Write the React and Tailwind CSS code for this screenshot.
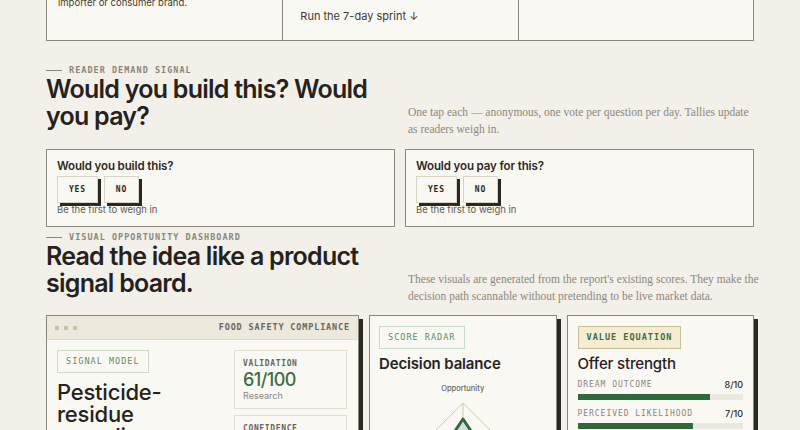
import React from "react";

const sans = "font-['Inter','Liberation_Sans',sans-serif]";
const mono = "font-['DejaVu_Sans_Mono','Liberation_Mono',monospace]";
const serif = "font-['Liberation_Serif','DejaVu_Serif',serif]";

const SectionLabel = ({ children }) => (
  <div className="flex items-center gap-[7px] h-[12px]">
    <span className="block w-[16px] h-px bg-[#8b867b]" />
    <span className={`${mono} text-[8.5px] font-bold tracking-[0.12em] text-[#8b867b] leading-[12px]`}>
      {children}
    </span>
  </div>
);

const SectionHead = ({ label, title, note }) => (
  <div className="grid grid-cols-2 gap-[16px] items-end">
    <div className="pb-[7px]">
      <SectionLabel>{label}</SectionLabel>
      <h2 className={`${sans} text-[25px] font-semibold leading-[27px] tracking-[-0.03em] text-[#25221d]`}>
        {title}
      </h2>
    </div>
    <p className={`${serif} -mr-[10px] text-[11.5px] leading-[16.5px] text-[#8d877c]`}>{note}</p>
  </div>
);

const VoteButton = ({ children }) => (
  <button className={`${mono} h-[27px] px-[11px] border border-[#d9d3c6] bg-[#faf8f3] text-[8px] font-bold tracking-[0.1em] text-[#2b2822] shadow-[3px_3px_0_#2b2822]`}>
    {children}
  </button>
);

const VoteCard = ({ question }) => (
  <div className="border border-[#8b877d] bg-[#faf8f3] px-[10px] pt-[8px] pb-[10px]">
    <div className={`${sans} text-[11.5px] font-semibold leading-[16px] tracking-[-0.01em] text-[#2b2822]`}>{question}</div>
    <div className="flex gap-[6px] mt-[2px]">
      <VoteButton>YES</VoteButton>
      <VoteButton>NO</VoteButton>
    </div>
    <div className={`${sans} text-[9.5px] leading-[12px] mt-[1px] text-[#5f5a51]`}>Be the first to weigh in</div>
  </div>
);

const Badge = ({ children, tone = "green" }) => (
  <div
    className={
      tone === "gold"
        ? `${mono} flex w-fit items-center h-[23px] px-[8px] border border-[#c7c096] bg-[#f6ecd3] text-[8.5px] font-bold tracking-[0.12em] text-[#3b6e45]`
        : `${mono} flex w-fit items-center h-[23px] px-[8px] border border-[#cadcc9] text-[8.5px] tracking-[0.12em] text-[#5a8f64]`
    }
  >
    {children}
  </div>
);

const Metric = ({ label, value, sub }) => (
  <div className="border border-[#e4ded0] px-[8px] pt-[7px] pb-[6px]">
    <div className={`${mono} text-[8px] font-bold tracking-[0.08em] text-[#6b665b] leading-[12px]`}>{label}</div>
    <div className={`${sans} text-[18px] font-medium leading-[20px] tracking-[-0.03em] text-[#3a6f43]`}>{value}</div>
    <div className={`${sans} text-[9px] leading-[12px] text-[#8b867b]`}>{sub}</div>
  </div>
);

const Bar = ({ label, score }) => (
  <div>
    <div className="flex justify-between items-center h-[12px]">
      <span className={`${mono} text-[8px] tracking-[0.12em] text-[#8b867b]`}>{label}</span>
      <span className={`${sans} text-[9px] font-medium text-[#2b2822]`}>{score}/10</span>
    </div>
    <div className="h-[6px] mt-[3px] bg-[#ebe8df]">
      <div className="h-full bg-[#2e6a3c]" style={{ width: `${score * 10}%` }} />
    </div>
  </div>
);

const Radar = () => (
  <svg width="160" height="120" viewBox="0 0 160 120" className="mx-auto">
    <polygon points="80,2 138,60 80,118 22,60" fill="none" stroke="#d8c9aa" strokeWidth="1" />
    <polygon points="80,21 119,60 80,99 41,60" fill="none" stroke="#e6dcc6" strokeWidth="1" />
    <line x1="80" y1="2" x2="80" y2="118" stroke="#d8c9aa" strokeWidth="1" />
    <line x1="22" y1="60" x2="138" y2="60" stroke="#d8c9aa" strokeWidth="1" />
    <polygon points="80,18 108,60 80,96 52,60" fill="#cfe1d8" stroke="#2e6a3c" strokeWidth="3" strokeLinejoin="round" />
  </svg>
);

export default function App() {
  return (
    <div className="min-h-screen bg-[#f3f0e9] overflow-hidden">
      <div className="w-[708px] mx-auto">
        {/* tail of the previous section */}
        <div className="grid grid-cols-3 h-[101px] -mt-[60px] border border-[#8b877d] bg-[#faf8f3]">
          <div className={`${sans} flex flex-col justify-end px-[11px] pb-[30px] text-[9.5px] leading-[14px] text-[#3d3a33]`}>
            <p>Best first buyer: a mid-size produce</p>
            <p>importer or consumer brand.</p>
          </div>
          <div className={`${sans} flex flex-col justify-end border-l border-[#8b877d] px-[17px] pb-[17px] text-[11px] leading-[14px] text-[#3d3a33]`}>
            <p>Run the 7-day sprint ↓</p>
          </div>
          <div className="border-l border-[#8b877d]" />
        </div>

        <div className="mt-[23px]">
          <SectionHead
            label="READER DEMAND SIGNAL"
            title="Would you build this? Would you pay?"
            note={
              <>
                One tap each — anonymous, one vote per question per day. Tallies update
                <br />
                as readers weigh in.
              </>
            }
          />
        </div>

        <div className="grid grid-cols-2 gap-[10px] mt-[12px]">
          <VoteCard question="Would you build this?" />
          <VoteCard question="Would you pay for this?" />
        </div>

        <div className="mt-[4px]">
          <SectionHead
            label="VISUAL OPPORTUNITY DASHBOARD"
            title="Read the idea like a product signal board."
            note={
              <>
                These visuals are generated from the report's existing scores. They make the
                <br />
                decision path scannable without pretending to be live market data.
              </>
            }
          />
        </div>

        <div className="grid grid-cols-[313px_1fr_1fr] gap-[10px] mt-[11px] items-start">
          {/* signal model card */}
          <div className="border border-[#8b877d] bg-[#faf8f3] shadow-[4px_4px_0_#2b2822] h-[220px]">
            <div className="flex items-center justify-between h-[24px] px-[8px] bg-[#ece8dc] border-b border-[#e0dbcd]">
              <div className="flex gap-[5px]">
                <span className="w-[4px] h-[4px] bg-[#cbc1a9]" />
                <span className="w-[4px] h-[4px] bg-[#cbc1a9]" />
                <span className="w-[4px] h-[4px] bg-[#cbc1a9]" />
              </div>
              <span className={`${mono} text-[8.5px] font-bold tracking-[0.1em] text-[#6b665b]`}>FOOD SAFETY COMPLIANCE</span>
            </div>
            <div className="grid grid-cols-[1fr_113px] gap-[14px] pl-[10px] pr-[11px] pt-[10px]">
              <div>
                <Badge>SIGNAL MODEL</Badge>
                <h3 className={`${sans} mt-[8px] text-[22px] font-medium leading-[22px] tracking-[-0.01em] text-[#25221d]`}>
                  Pesticide-residue compliance check
                </h3>
              </div>
              <div className="flex flex-col gap-[6px]">
                <Metric label="VALIDATION" value="61/100" sub="Research" />
                <Metric label="CONFIDENCE" value="Medium" sub="Evidence" />
              </div>
            </div>
          </div>

          {/* radar card */}
          <div className="border border-[#8b877d] bg-[#faf8f3] shadow-[4px_4px_0_#2b2822] h-[220px] px-[9px] pt-[10px]">
            <Badge>SCORE RADAR</Badge>
            <div className={`${sans} mt-[7px] text-[15px] font-semibold leading-[16px] tracking-[-0.01em] text-[#25221d]`}>Decision balance</div>
            <div className={`${sans} mt-[12px] text-center text-[7.5px] font-medium leading-[10px] text-[#6b6860]`}>Opportunity</div>
            <div className="mt-[7px]">
              <Radar />
            </div>
          </div>

          {/* value equation card */}
          <div className="border border-[#8b877d] bg-[#faf8f3] shadow-[4px_4px_0_#2b2822] h-[220px] px-[10px] pt-[10px]">
            <Badge tone="gold">VALUE EQUATION</Badge>
            <div className={`${sans} mt-[7px] text-[15px] font-medium leading-[16px] tracking-[-0.01em] text-[#25221d]`}>Offer strength</div>
            <div className="mt-[7px] flex flex-col gap-[8px]">
              <Bar label="DREAM OUTCOME" score={8} />
              <Bar label="PERCEIVED LIKELIHOOD" score={7} />
              <Bar label="TIME DELAY" score={6} />
            </div>
          </div>
        </div>
      </div>
    </div>
  );
}
